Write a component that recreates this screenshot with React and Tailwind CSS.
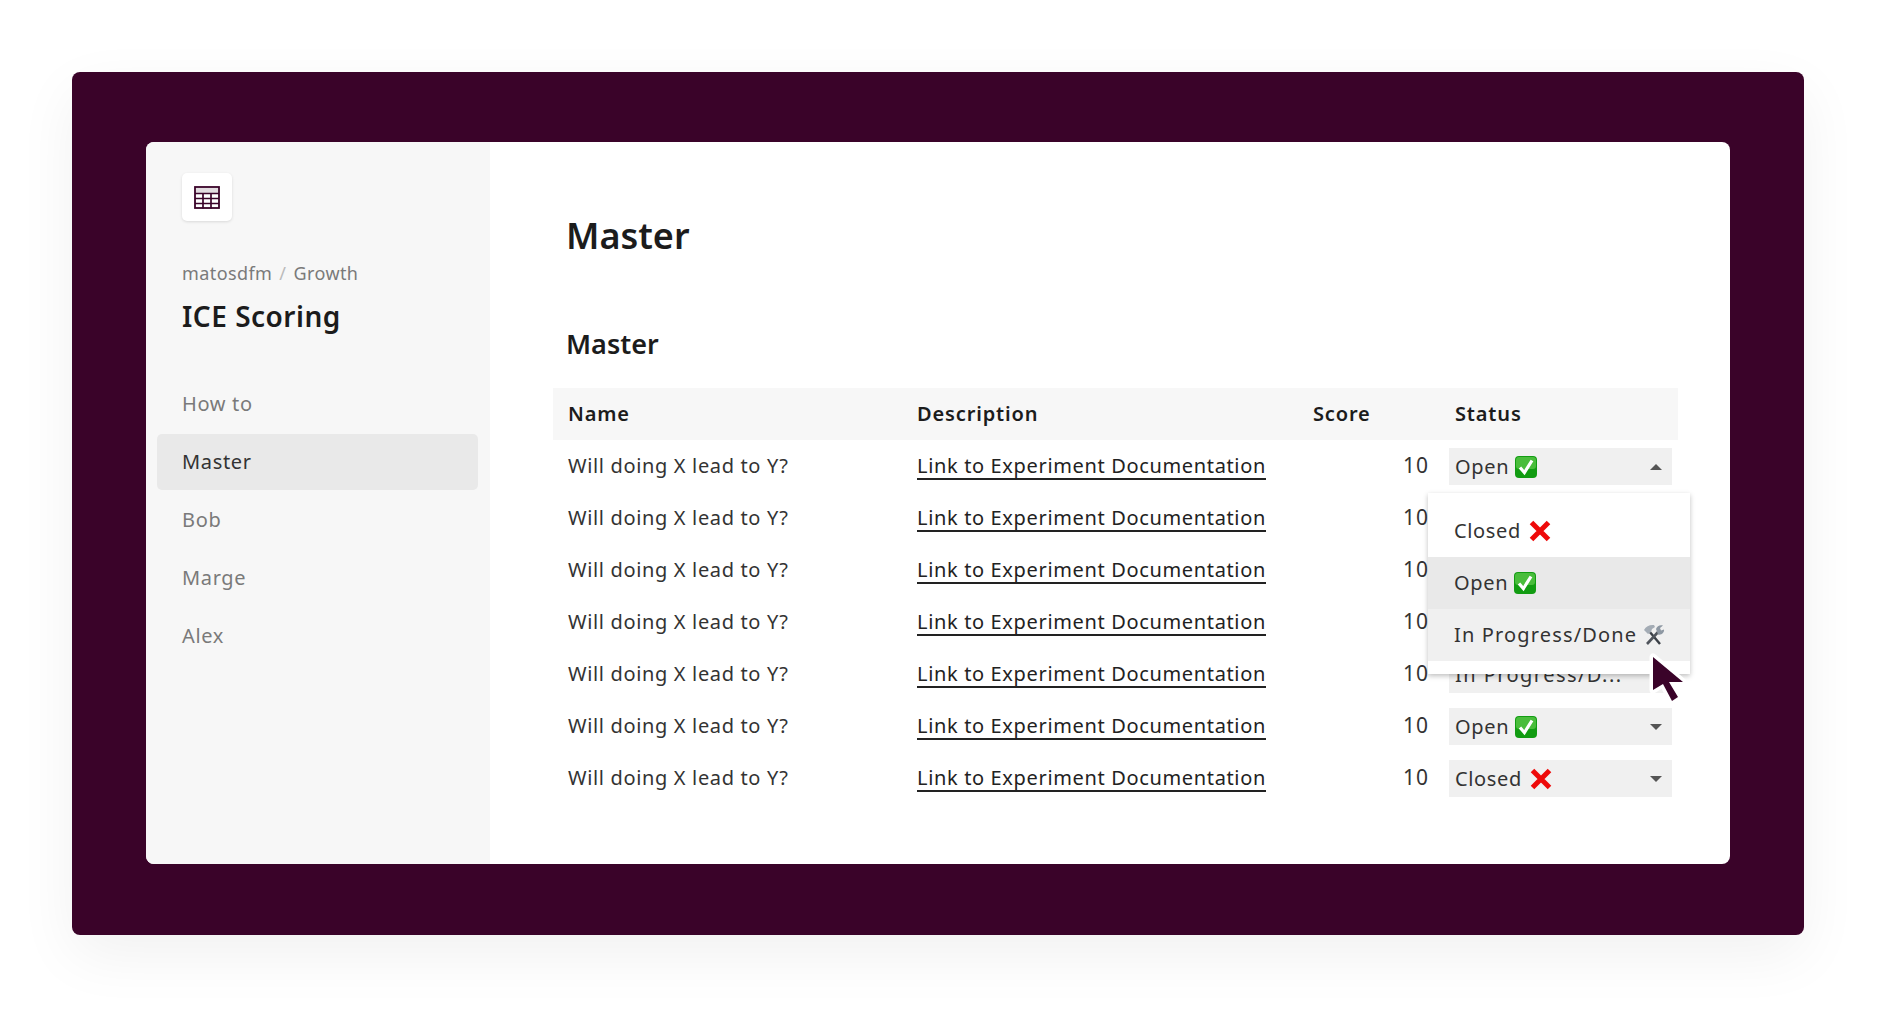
import React from 'react';

const rows = [
  'open', 'closed', 'open', 'closed', 'progress', 'open', 'closed',
];

const CheckEmoji = () => (
  <svg viewBox="0 0 22 22" className="w-[22px] h-[22px] shrink-0">
    <rect x="0" y="0" width="22" height="22" rx="4" fill="#129c12" />
    <rect x="1" y="1" width="20" height="12" rx="3" fill="#5cc84a" opacity="0.75" />
    <path d="M5 11.5l4.4 5L17 4.5" fill="none" stroke="#ffffff" strokeWidth="3.2" />
  </svg>
);

const CrossEmoji = () => (
  <svg viewBox="0 0 22 22" className="w-[22px] h-[22px] shrink-0">
    <path d="M2.5 2.5l17 17M19.5 2.5l-17 17" fill="none" stroke="#ee0a0a" strokeWidth="5" />
  </svg>
);

const ToolsEmoji = () => (
  <svg viewBox="0 0 22 22" className="w-[22px] h-[22px] shrink-0">
    <path d="M17 20L6 7" stroke="#3a3f46" strokeWidth="2.4" fill="none" />
    <path d="M1 6c2-4 6-5.500 10-5l1 2-3 2-1 3-3 2z" fill="#a4acb5" />
    <path d="M4 20L16 7" stroke="#50555c" strokeWidth="2.6" fill="none" />
    <path d="M13 5c1-3 4-4.500 7-3.500l-3 2.500 1 2.500 3-1c.5 3-2.500 6-6 5z" fill="#8e98a3" />
  </svg>
);

const StatusValue = ({ status }) => {
  if (status === 'open') return <>Open <CheckEmoji /></>;
  if (status === 'closed') return <span className="flex items-center gap-[8px]">Closed <CrossEmoji /></span>;
  return <span className="tracking-[1.45px]">In Progress/D...</span>;
};

const Row = ({ status, first }) => (
  <div className="grid grid-cols-[349px_396px_142px_238px] h-[52px] items-center text-[20px] text-[#333333]">
    <div className="pl-[15px]">Will doing X lead to Y?</div>
    <div className="pl-[15px]">
      <a className="inline-block leading-[24px] border-b-2 border-[#222222] text-[#222222]">Link to Experiment Documentation</a>
    </div>
    <div className="text-right pr-[11px] text-[21px] tracking-[1px]">10</div>
    <div className="pl-[9px]">
      <div className="h-[37px] w-[223px] mt-[1px] bg-[#f0f0f0] pl-[6px] pr-[10px] flex items-center justify-between">
        <span className="flex items-center gap-[6px]"><StatusValue status={status} /></span>
        <span className={`w-0 h-0 border-x-[6px] border-x-transparent ${first ? 'border-b-[6px] border-b-[#555555]' : 'border-t-[6px] border-t-[#555555]'}`} />
      </div>
    </div>
  </div>
);

const Dropdown = () => (
  <div className="absolute left-[938px] top-[104px] w-[262px] h-[181px] bg-white pt-[12px] shadow-[0_2px_5px_rgba(0,0,0,0.25)] text-[20px] text-[#333333]">
    <div className="h-[52px] pl-[26px] flex items-center gap-[8px]">Closed <CrossEmoji /></div>
    <div className="h-[52px] pl-[26px] flex items-center gap-[6px] bg-[#e9e9e9]">Open <CheckEmoji /></div>
    <div className="h-[52px] pl-[26px] flex items-center gap-[6px] bg-[#f0f0f0]">
      <span className="tracking-[1.15px]">In Progress/Done</span> <ToolsEmoji />
    </div>
  </div>
);

const Cursor = () => (
  <svg viewBox="0 0 44 60" className="absolute left-[1157px] top-[262px] w-[44px] h-[60px]">
    <path
      d="M6 6V39L16 33 25 50 31 46 22 31H36Z"
      fill="#3a0329"
      stroke="#ffffff"
      strokeWidth="7"
      strokeLinejoin="round"
      paintOrder="stroke"
    />
  </svg>
);

const App = () => {
  const nav = ['How to', 'Master', 'Bob', 'Marge', 'Alex'];

  return (
    <div className="w-[1882px] h-[1013px] bg-white pt-[72px] pl-[72px] overflow-hidden font-['Noto_Sans',sans-serif] tracking-[0.65px]">
      <div className="w-[1732px] h-[863px] bg-[#3a0329] rounded-[8px] pt-[70px] pl-[74px] shadow-[0_20px_60px_rgba(0,0,0,0.06)]">
        <div className="w-[1584px] h-[722px] rounded-[8px] overflow-hidden bg-white flex">
          {/* Sidebar */}
          <aside className="w-[344px] shrink-0 bg-[#f7f7f7] pt-[31px] px-[11px]">
            <div className="ml-[25px] w-[50px] h-[48px] bg-white rounded-[5px] shadow-[0_1px_3px_rgba(0,0,0,0.12)] flex items-center justify-center">
              <svg viewBox="0 0 26 23" className="w-[26px] h-[23px]">
                <rect x="1" y="1" width="24" height="21" fill="#ffffff" stroke="#3a0329" strokeWidth="1.8" />
                <rect x="2" y="2" width="22" height="5" fill="#e2dce0" />
                <path d="M1 7.500h24M1 12.500h24M1 17.500h24M9 7.500v15M17 7.500v15" stroke="#3a0329" strokeWidth="1.7" fill="none" />
              </svg>
            </div>
            <div className="ml-[25px] mt-[39px] text-[18px] leading-[26px] text-[#7a7a7a] tracking-[0.4px]">
              matosdfm <span className="text-[#bbbbbb] mx-[2px]">/</span> Growth
            </div>
            <div className="ml-[25px] mt-[12px] text-[28px] leading-[36px] font-semibold text-[#1c1c1c] tracking-[0.5px]">ICE Scoring</div>
            <nav className="mt-[42px] w-[321px] flex flex-col gap-[2px]">
              {nav.map((item) => (
                <div
                  key={item}
                  className={`h-[56px] pl-[25px] flex items-center text-[20px] rounded-[5px] ${
                    item === 'Master' ? 'bg-[#e9e9e9] text-[#333333]' : 'text-[#7a7a7a]'
                  }`}
                >
                  {item}
                </div>
              ))}
            </nav>
          </aside>

          {/* Content */}
          <main className="flex-1 relative pl-[63px]">
            <h1 className="ml-[13px] mt-[68px] text-[36px] leading-[52px] font-semibold text-[#1c1c1c] tracking-normal">Master</h1>
            <h2 className="ml-[13px] mt-[64px] text-[27px] leading-[36px] font-semibold text-[#1c1c1c] tracking-normal">Master</h2>
            <div className="mt-[26px] w-[1125px]">
              <div className="grid grid-cols-[349px_396px_142px_238px] h-[52px] items-center bg-[#f7f7f7] text-[20px] font-semibold text-[#1c1c1c] tracking-[0.85px]">
                <div className="pl-[15px]">Name</div>
                <div className="pl-[15px]">Description</div>
                <div className="pl-[15px]">Score</div>
                <div className="pl-[15px]">Status</div>
              </div>
              {rows.map((status, i) => (
                <Row key={i} status={status} first={i === 0} />
              ))}
            </div>
            <div className="absolute left-0 top-[247px]">
              <Dropdown />
              <Cursor />
            </div>
          </main>
        </div>
      </div>
    </div>
  );
};

export default App;
